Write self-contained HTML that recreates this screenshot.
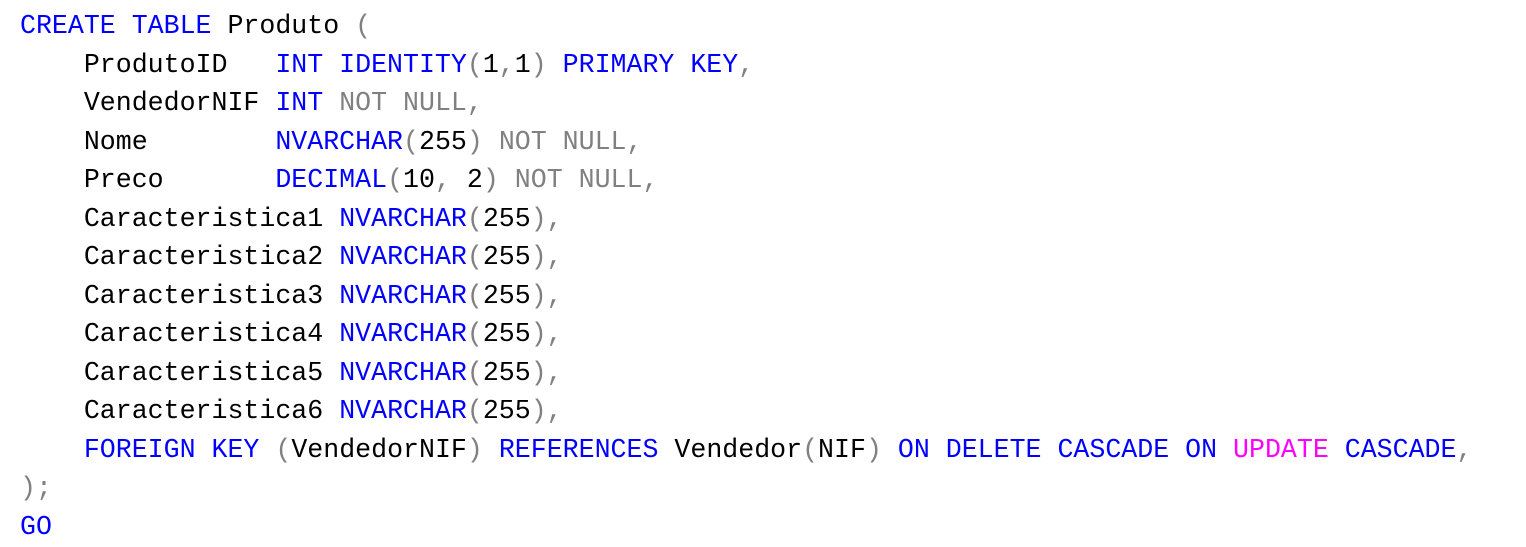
<!DOCTYPE html>
<html><head><meta charset="utf-8"><style>
html,body{margin:0;padding:0;background:#fff;width:1526px;height:547px;overflow:hidden}
pre{margin:0;position:absolute;left:20px;top:7px;font-family:"Liberation Mono",monospace;font-size:26.6px;line-height:38.5px;color:#000}
.k{color:#0000ff}.g{color:#808080}.m{color:#ff00ff}
</style></head><body>
<pre><span class="k">CREATE TABLE</span> Produto <span class="g">(</span>
    ProdutoID   <span class="k">INT IDENTITY</span><span class="g">(</span>1<span class="g">,</span>1<span class="g">)</span> <span class="k">PRIMARY KEY</span><span class="g">,</span>
    VendedorNIF <span class="k">INT</span> <span class="g">NOT NULL,</span>
    Nome        <span class="k">NVARCHAR</span><span class="g">(</span>255<span class="g">)</span> <span class="g">NOT NULL,</span>
    Preco       <span class="k">DECIMAL</span><span class="g">(</span>10<span class="g">,</span> 2<span class="g">)</span> <span class="g">NOT NULL,</span>
    Caracteristica1 <span class="k">NVARCHAR</span><span class="g">(</span>255<span class="g">),</span>
    Caracteristica2 <span class="k">NVARCHAR</span><span class="g">(</span>255<span class="g">),</span>
    Caracteristica3 <span class="k">NVARCHAR</span><span class="g">(</span>255<span class="g">),</span>
    Caracteristica4 <span class="k">NVARCHAR</span><span class="g">(</span>255<span class="g">),</span>
    Caracteristica5 <span class="k">NVARCHAR</span><span class="g">(</span>255<span class="g">),</span>
    Caracteristica6 <span class="k">NVARCHAR</span><span class="g">(</span>255<span class="g">),</span>
    <span class="k">FOREIGN KEY</span> <span class="g">(</span>VendedorNIF<span class="g">)</span> <span class="k">REFERENCES</span> Vendedor<span class="g">(</span>NIF<span class="g">)</span> <span class="k">ON DELETE CASCADE ON</span> <span class="m">UPDATE</span> <span class="k">CASCADE</span><span class="g">,</span>
<span class="g">);</span>
<span class="k">GO</span></pre>
</body></html>
